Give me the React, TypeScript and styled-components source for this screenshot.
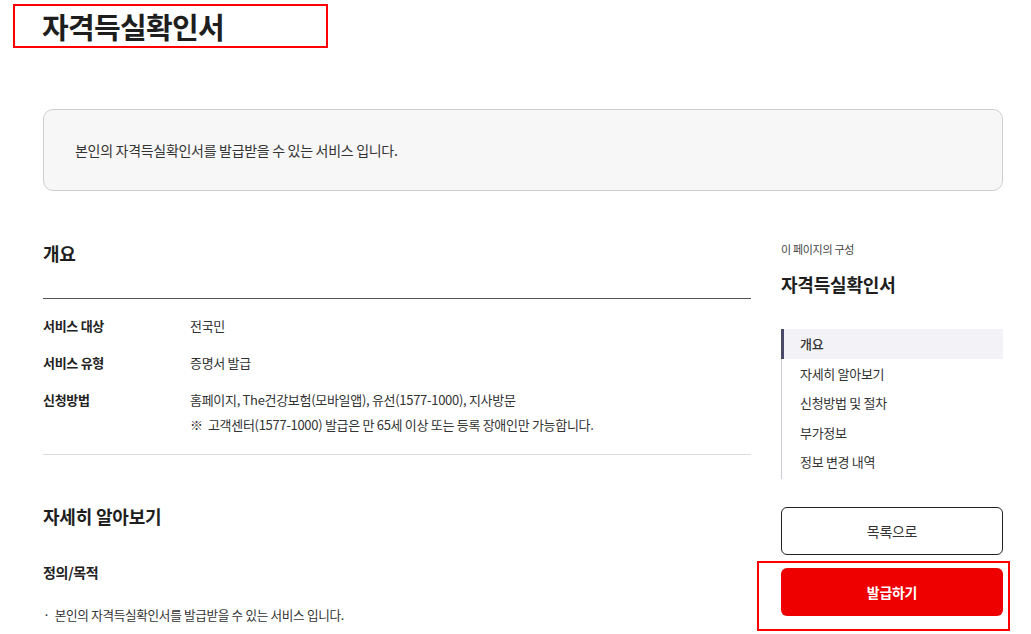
import React from "react";
import styled, { createGlobalStyle } from "styled-components";

const Global = createGlobalStyle`
  html, body { margin: 0; padding: 0; background: #fff; }
  body {
    font-family: "Noto Sans CJK KR", "Noto Sans", sans-serif;
    color: #333;
    letter-spacing: -0.3px;
    -webkit-font-smoothing: antialiased;
  }
  * { box-sizing: border-box; }
`;

const Page = styled.div`
  width: 1031px;
  height: 634px;
  overflow: hidden;
  padding-top: 4px;
`;

const TitleBox = styled.h1`
  margin: 0 0 0 13px;
  width: 315px;
  height: 44px;
  border: 2px solid #ff0000;
  padding-left: 27px;
  font-size: 29px;
  line-height: 40px;
  font-weight: 700;
  color: #1e1e1e;
  letter-spacing: -0.7px;
`;

const Container = styled.div`
  width: 960px;
  margin-left: 43px;
`;

const Intro = styled.div`
  margin-top: 61px;
  height: 82px;
  border: 1px solid #cfcfcf;
  border-radius: 10px;
  background: #f7f7f7;
  padding: 30px 31px;
  font-size: 14px;
  line-height: 20px;
  color: #333;
`;

const Row = styled.div`
  display: flex;
  gap: 30px;
  margin-top: 40px;
  align-items: flex-start;
`;

const Main = styled.main`
  width: 708px;
`;

const SectionTitle = styled.h2<{ $top: number }>`
  margin: ${(p) => p.$top}px 0 0;
  font-size: 18px;
  line-height: 26px;
  font-weight: 700;
  color: #1e1e1e;
  letter-spacing: -0.2px;
`;

const InfoList = styled.dl`
  margin: 32px 0 0;
  padding: 17px 0 19px;
  border-top: 1px solid #555;
  border-bottom: 1px solid #dcdcdc;
  display: grid;
  grid-template-columns: 147px 1fr;
  row-gap: 17px;
  font-size: 13px;
  line-height: 20px;
`;

const Label = styled.dt`
  font-weight: 700;
  color: #222;
`;

const Value = styled.dd`
  margin: 0;
  color: #333;
`;

const Note = styled.p`
  margin: 5px 0 0;
`;

const SubTitle = styled.h3`
  margin: 33px 0 0;
  font-size: 14px;
  line-height: 20px;
  font-weight: 700;
  color: #222;
`;

const Bullet = styled.p`
  margin: 23px 0 0;
  font-size: 12.6px;
  line-height: 20px;
  color: #333;
  &::before {
    content: "·";
    margin-right: 5px;
  }
`;

const Side = styled.aside`
  width: 222px;
`;

const SideCaption = styled.p`
  margin: 10px 0 0;
  font-size: 11px;
  line-height: 16px;
  color: #444;
`;

const SideTitle = styled.h2`
  margin: 14px 0 0;
  font-size: 18px;
  line-height: 26px;
  font-weight: 700;
  color: #1e1e1e;
  letter-spacing: -0.2px;
`;

const Nav = styled.ul`
  list-style: none;
  margin: 32px 0 0;
  padding: 0 0 2px;
  border-left: 1px solid #c9ccd6;
`;

const NavItem = styled.li<{ $active?: boolean }>`
  position: relative;
  height: 29.5px;
  line-height: 29.5px;
  padding-left: 18px;
  font-size: 13px;
  color: #333;
  background: ${(p) => (p.$active ? "#f2f2f7" : "transparent")};
  font-weight: ${(p) => (p.$active ? 500 : 400)};
  &::before {
    content: "";
    display: ${(p) => (p.$active ? "block" : "none")};
    position: absolute;
    left: -1px;
    top: 0;
    bottom: 0;
    width: 3px;
    background: #4a4a68;
  }
`;

const ListButton = styled.button`
  display: block;
  width: 222px;
  height: 48px;
  margin-top: 28px;
  border: 1px solid #222;
  border-radius: 6px;
  background: #fff;
  font-family: inherit;
  font-size: 14px;
  letter-spacing: -0.3px;
  color: #333;
`;

const Highlight = styled.div`
  margin: 6px -7px 0 -24px;
  border: 2px solid #ff0000;
  padding: 5px 5px 13px 22px;
`;

const IssueButton = styled.button`
  display: block;
  width: 222px;
  height: 48px;
  border: none;
  border-radius: 6px;
  background: #ee0000;
  font-family: inherit;
  font-size: 14px;
  font-weight: 700;
  letter-spacing: -0.3px;
  color: #fff;
`;

const navItems = ["개요", "자세히 알아보기", "신청방법 및 절차", "부가정보", "정보 변경 내역"];

export default function App() {
  return (
    <Page>
      <Global />
      <TitleBox>자격득실확인서</TitleBox>
      <Container>
        <Intro>본인의 자격득실확인서를 발급받을 수 있는 서비스 입니다.</Intro>
        <Row>
          <Main>
            <SectionTitle $top={9}>개요</SectionTitle>
            <InfoList>
              <Label>서비스 대상</Label>
              <Value>전국민</Value>
              <Label>서비스 유형</Label>
              <Value>증명서 발급</Value>
              <Label>신청방법</Label>
              <Value>
                홈페이지, The건강보험(모바일앱), 유선(1577-1000), 지사방문
                <Note>※&nbsp; 고객센터(1577-1000) 발급은 만 65세 이상 또는 등록 장애인만 가능합니다.</Note>
              </Value>
            </InfoList>
            <SectionTitle $top={48}>자세히 알아보기</SectionTitle>
            <SubTitle>정의/목적</SubTitle>
            <Bullet>본인의 자격득실확인서를 발급받을 수 있는 서비스 입니다.</Bullet>
          </Main>
          <Side>
            <SideCaption>이 페이지의 구성</SideCaption>
            <SideTitle>자격득실확인서</SideTitle>
            <Nav>
              {navItems.map((t, i) => (
                <NavItem key={t} $active={i === 0}>
                  {t}
                </NavItem>
              ))}
            </Nav>
            <ListButton>목록으로</ListButton>
            <Highlight>
              <IssueButton>발급하기</IssueButton>
            </Highlight>
          </Side>
        </Row>
      </Container>
    </Page>
  );
}
